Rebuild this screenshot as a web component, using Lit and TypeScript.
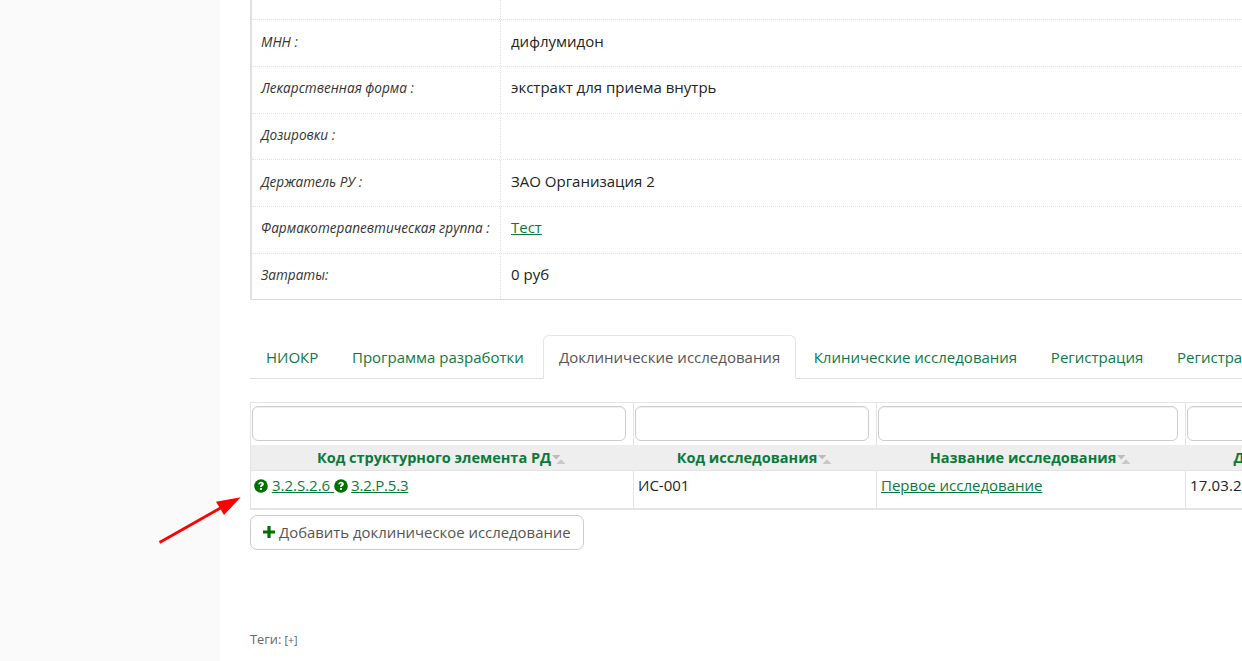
import { LitElement, html, css } from "lit";
import { customElement } from "lit/decorators.js";

const rows: [string, unknown][] = [
  ["Код АТХ :", ""],
  ["МНН :", "дифлумидон"],
  ["Лекарственная форма :", "экстракт для приема внутрь"],
  ["Дозировки :", ""],
  ["Держатель РУ :", "ЗАО Организация 2"],
  ["Фармакотерапевтическая группа :", html`<a href="#">Тест</a>`],
  ["Затраты:", "0 руб"],
];

const q = html`<svg class="q" viewBox="0 0 14 14" width="14" height="14"><circle cx="7" cy="7" r="6.8" fill="#007000"/><path d="M4.2 5.3c.1-1.6 1.3-2.6 2.9-2.6 1.6 0 2.8 1 2.8 2.3 0 1.9-2 1.8-2 3.1H6c0-2.2 1.7-2.1 1.7-3.1 0-.4-.3-.7-.7-.7-.5 0-.8.3-.9.9z" fill="#fff"/><rect x="5.9" y="9" width="2" height="2" fill="#fff"/></svg>`;
const sort = html`<svg class="sort" viewBox="0 0 14 9" width="14" height="9"><path d="M0 0h8.4L4.2 4.4z" fill="#bcbcbc"/><path d="M4.5 9h9L9 4.2z" fill="#c8c8c8"/></svg>`;

@customElement("app-root")
export class AppRoot extends LitElement {
  static styles = css`
    :host { display: block; height: 661px; overflow: hidden; position: relative; background: #fff;
      font-family: "Open Sans", "Noto Sans", sans-serif; font-size: 15px; color: #333; }
    * { box-sizing: border-box; }
    .layout { display: flex; height: 661px; }
    .side { width: 220px; flex: none; background: #fafafa; }
    .main { width: 1300px; flex: none; padding-left: 30px; margin-top: -26.33px; }
    a { color: #0a7a3c; text-decoration: underline; }
    .info { border-left: 2px solid #e0e0e0; border-bottom: 1px solid #d8d8d8; width: 1100px; }
    .row { display: grid; grid-template-columns: 249px 1fr; height: 46.67px; border-bottom: 1px dotted #e2e2e2; }
    .row:last-child { border-bottom: 0; height: 45.67px; }
    .row > div { padding: 0 10px; display: flex; align-items: center; white-space: nowrap; }
    .row > div:first-child { border-right: 1px dotted #e2e2e2; font-style: italic; font-size: 13.6px; color: #333; padding-left: 9px; padding-bottom: 4px; }
    .row > div:last-child { padding-bottom: 5px; color: #222; }
    .tabs { display: flex; margin-top: 35px; height: 44px; border-bottom: 1px solid #ddd; width: 1100px; align-items: stretch; }
    .tab { padding: 0 16px; margin-right: 1.7px; display: flex; align-items: center; color: #0a7a45; white-space: nowrap; }
    .tab.active { border: 1px solid #e4e4e4; border-bottom: 1px solid #fff; height: 44px; border-radius: 6px 6px 0 0; color: #555; background: #fff; padding: 0 14.5px 0 15px; margin-left: 1.3px; margin-right: 2px; }
    .grid { display: grid; grid-template-columns: 383px 243px 309px 261px; margin-top: 23px; width: 1196px; border-top: 1px solid #e4e4e4; border-left: 1px solid #e4e4e4; }
    .cell { border-right: 1px solid #e4e4e4; }
    .filter { height: 42px; padding: 3px 7px 3px 1px; }
    .filter input { display: block; width: 100%; height: 35px; border: 1px solid #ccc; border-radius: 6px; background: #fff; padding: 0; box-shadow: inset 0 1px 1px #eee; outline: none; }
    .head { height: 26px; background: #eee; border-right: 0; border-bottom: 1px solid #e4e4e4; font-weight: 700; font-size: 14.5px; color: #0a7a3c; display: flex; align-items: center; justify-content: center; white-space: nowrap; padding-right: 2px; }
    .sort { margin: 4px 0 0 1px; }
    .data { height: 39px; padding: 4px 3px 0 4px; border-bottom: 2px solid #e4e4e4; color: #222; white-space: nowrap; }
    .data.first { padding-left: 3px; }
    .second { letter-spacing: -0.2px; margin-left: -1px; }
    .date { letter-spacing: 0.15px; }
    .q { vertical-align: -1.5px; }
    .add { display: inline-flex; align-items: center; height: 35px; margin-top: 5px; padding: 0 12px 1px; border: 1px solid #ccc; border-radius: 7px; color: #555; background: #fff; gap: 4px; font-size: 14.9px; }
    .tags { margin-top: 80px; font-size: 12.8px; color: #666; }
    .tags span { font-size: 10.5px; color: #4b5f70; }
    .arrow { position: absolute; left: 155px; top: 490px; }
  `;

  render() {
    return html`
      <div class="layout">
        <div class="side"></div>
        <div class="main">
          <div class="info">
            ${rows.map(([k, v]) => html`<div class="row"><div>${k}</div><div>${v}</div></div>`)}
          </div>
          <div class="tabs">
            <div class="tab">НИОКР</div>
            <div class="tab">Программа разработки</div>
            <div class="tab active">Доклинические исследования</div>
            <div class="tab">Клинические исследования</div>
            <div class="tab">Регистрация</div>
            <div class="tab">Регистрационные</div>
          </div>
          <div class="grid">
            <div class="cell filter"><input /></div>
            <div class="cell filter"><input /></div>
            <div class="cell filter"><input /></div>
            <div class="cell filter"><input /></div>
            <div class="cell head">Код структурного элемента РД${sort}</div>
            <div class="cell head">Код исследования${sort}</div>
            <div class="cell head">Название исследования${sort}</div>
            <div class="cell head">Дата исследования${sort}</div>
            <div class="cell data first">${q} <a href="#">3.2.S.2.6 </a>${q} <a class="second" href="#">3.2.P.5.3</a></div>
            <div class="cell data">ИС-001</div>
            <div class="cell data"><a href="#">Первое исследование</a></div>
            <div class="cell data date">17.03.2020</div>
          </div>
          <div class="add">
            <svg viewBox="0 0 12 12" width="12" height="12"><path d="M4.4 0h3.2v4.4H12v3.2H7.6V12H4.4V7.6H0V4.4h4.4z" fill="#007000"/></svg>
            Добавить доклиническое исследование
          </div>
          <div class="tags">Теги: <span>[+]</span></div>
        </div>
      </div>
      <svg class="arrow" width="95" height="60" viewBox="155 490 95 60">
        <path d="M159.5 542.5 L224 506" stroke="#ff0000" stroke-width="2.8" fill="none"/>
        <path d="M240.7 497.3 L216 501.7 L224 515 Z" fill="#ff0000"/>
      </svg>
    `;
  }
}
